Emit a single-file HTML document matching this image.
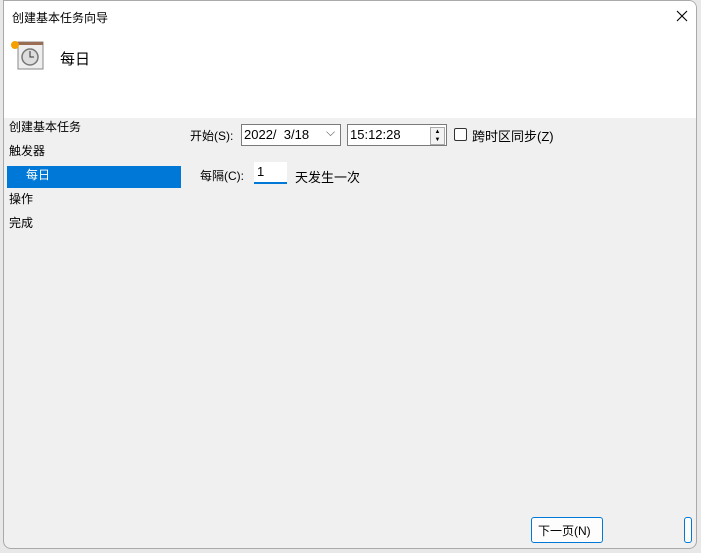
<!DOCTYPE html>
<html><head><meta charset="utf-8"><style>
body{margin:0;width:701px;height:553px;background:#e8e8e8;position:relative;overflow:hidden;font-family:"Liberation Sans","Noto Sans CJK SC",sans-serif;font-size:12px;color:#000}
.win{position:absolute;left:3px;top:0;width:694px;height:549px;background:#f0f0f0;border:1px solid #aaa;border-radius:0 8px 8px 8px;overflow:hidden;box-sizing:border-box}
.hdr{position:absolute;left:0;top:0;right:0;height:117px;background:#fff}
.a{position:absolute;white-space:nowrap}
.box{position:absolute;background:#fff;border:1px solid #7a7a7a;box-sizing:border-box}
</style></head><body>
<div class="win">
<div class="hdr">
<div class="a" style="left:8px;top:8px;font-size:12px">创建基本任务向导</div>
<svg class="a" style="left:672px;top:9px" width="12" height="12"><path d="M1 1L11 11M11 1L1 11" stroke="#000" stroke-width="1.1"/></svg>
<svg class="a" style="left:6px;top:38px" width="36" height="32"><rect x="8" y="3" width="25" height="27" fill="#eee" stroke="#888"/><rect x="8" y="3" width="25" height="3" fill="#9a6e55"/><circle cx="20" cy="18" r="8" fill="#ddd" stroke="#777" stroke-width="1.5"/><path d="M20 12v6h4" stroke="#333" fill="none"/><circle cx="5" cy="6" r="4" fill="#f5a000"/></svg>
<div class="a" style="left:56px;top:47px;font-size:15px">每日</div>
</div>
<div class="a" style="left:5px;top:117px">创建基本任务</div>
<div class="a" style="left:5px;top:141px">触发器</div>
<div class="a" style="left:3px;top:165px;width:174px;height:22px;background:#0078d7;color:#fff"><span style="position:absolute;left:19px;top:0px">每日</span></div>
<div class="a" style="left:5px;top:189px">操作</div>
<div class="a" style="left:5px;top:213px">完成</div>
<div class="a" style="left:186px;top:126px">开始(S):</div>
<div class="box" style="left:237px;top:123px;width:100px;height:22px"><span class="a" style="left:2px;top:2px;font-size:13px">2022/&nbsp; 3/18</span><span class="a" style="left:84px;top:0px;color:#555">⌵</span></div>
<div class="box" style="left:343px;top:123px;width:100px;height:22px"><span class="a" style="left:2px;top:2px;font-size:13px">15:12:28</span><span class="a" style="left:82px;top:2px;width:13px;height:16px;border:1px solid #aaa;background:#f3f3f3;font-size:6px;line-height:8px;text-align:center">▲<br>▼</span></div>
<div class="a" style="left:450px;top:127px;width:11px;height:11px;border:1px solid #333;border-radius:2px;background:#fff"></div>
<div class="a" style="left:468px;top:125px;font-size:13px">跨时区同步(Z)</div>
<div class="a" style="left:196px;top:166px">每隔(C):</div>
<div class="a" style="left:250px;top:161px;width:33px;height:22px;background:#fff;border-bottom:2px solid #0078d7;box-sizing:border-box"><span class="a" style="left:3px;top:2px;font-size:13px">1</span></div>
<div class="a" style="left:291px;top:166px;font-size:13px">天发生一次</div>
<div class="a" style="left:527px;top:516px;width:70px;height:24px;border:1px solid #0078d7;border-radius:3px;background:#fdfdfd"><span class="a" style="left:6px;top:4px">下一页(N)</span></div>
<div class="a" style="left:680px;top:516px;width:6px;height:24px;border:1px solid #0078d7;border-radius:3px;background:#fdfdfd"></div>
</div>
</body></html>
